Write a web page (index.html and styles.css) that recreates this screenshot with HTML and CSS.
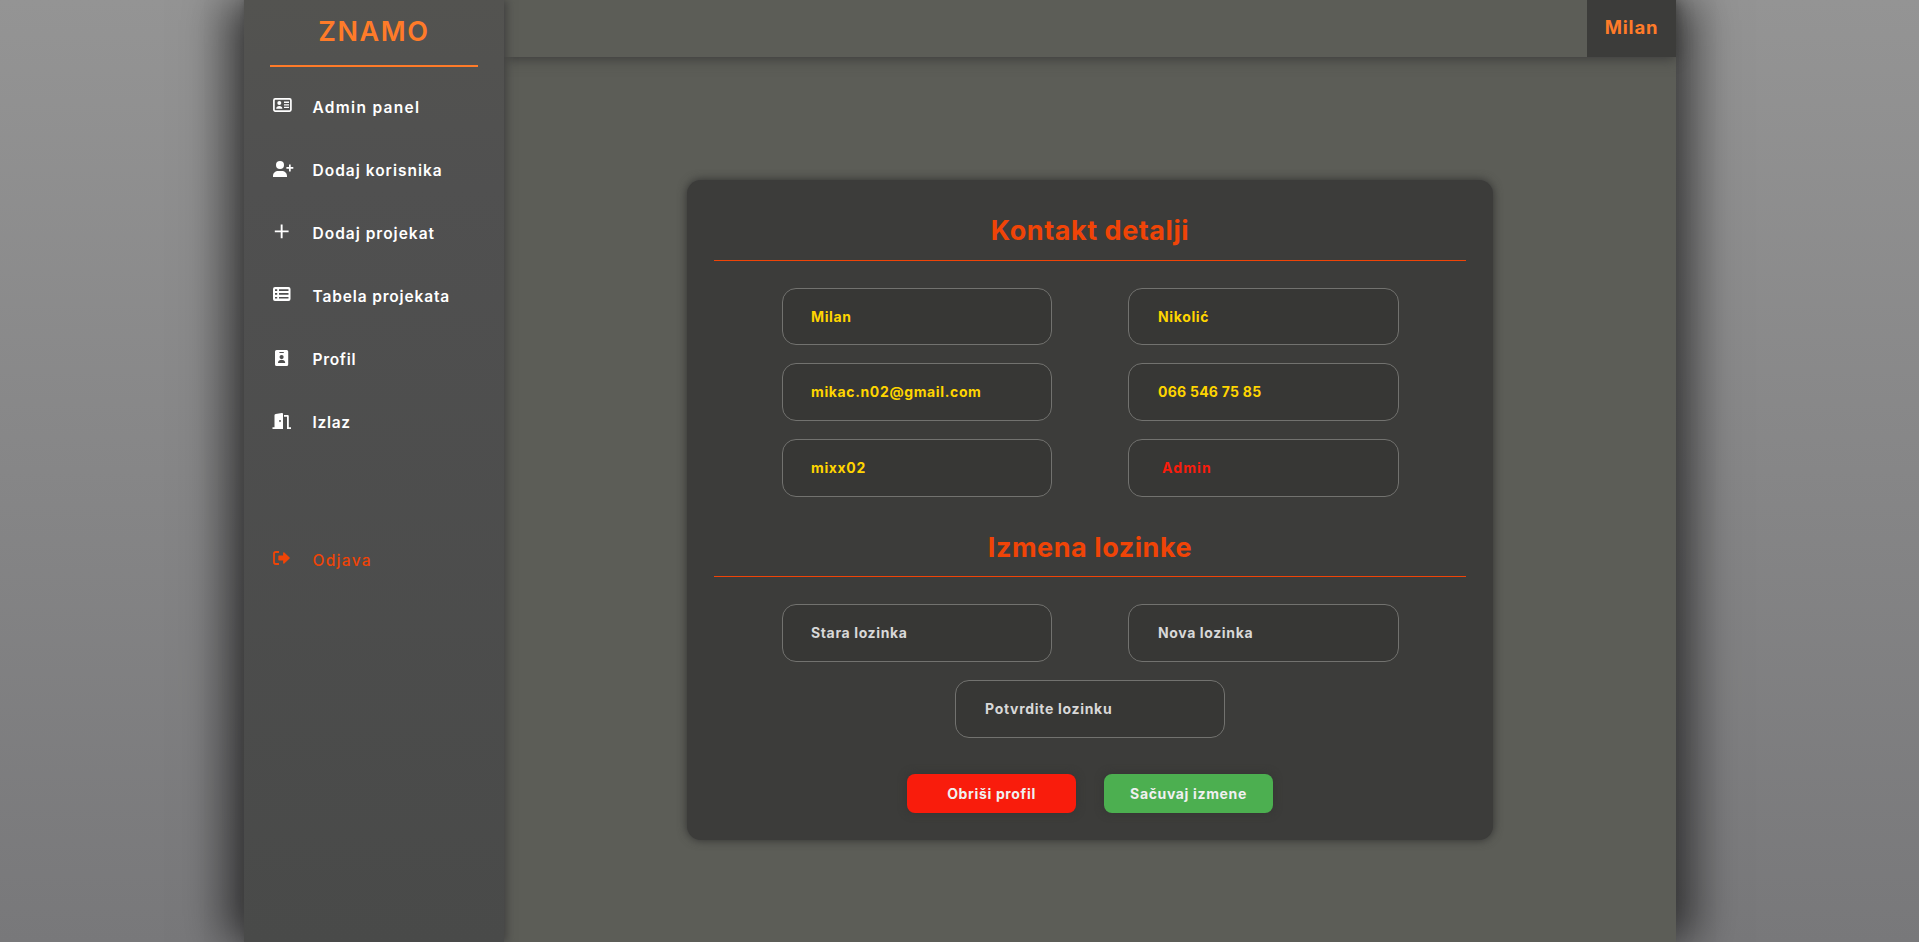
FILE: index.html
```html
<!DOCTYPE html>
<html lang="sr">
<head>
<meta charset="utf-8">
<title>Znamo</title>
<link rel="stylesheet" href="styles.css">
</head>
<body>
<div class="app">
  <aside class="sidebar">
    <div class="brand"><span>ZNAMO</span></div>
    <nav class="nav">
      <a class="item"><svg class="icon" width="20" height="16" viewBox="0 0 20 16"><rect x="1.9" y=".9" width="17" height="12.2" rx="1.3" fill="none" stroke="currentColor" stroke-width="1.7"/><circle cx="7.3" cy="5" r="2"/><path d="M4.200 10.800c0-2 1.300-2.900 3.100-2.900s3.100.9 3.100 2.900zM12 3.600h5v1.300h-5zM12 6.200h5v1.300h-5zM12 8.800h5v1.300h-5z"/></svg><span class="t1">Admin panel</span></a>
      <a class="item"><svg class="icon" width="22" height="16" viewBox="0 0 22 16"><circle cx="8" cy="4" r="4"/><path d="M1 16v-1c0-3 2.200-5 5.400-5h3.200c3.200 0 5.400 2 5.400 5v1zM17 3.500h1.700v2.600h2.600v1.700h-2.600v2.600H17V7.800h-2.600V6.100H17z"/></svg><span class="t2">Dodaj korisnika</span></a>
      <a class="item"><svg class="icon" width="20" height="16" viewBox="0 0 20 16"><path d="M8.700.5h1.900v5.900h6v1.900h-6v5.900H8.700V8.300H2.800V6.400h5.900z"/></svg><span class="t3">Dodaj projekat</span></a>
      <a class="item"><svg class="icon" width="20" height="16" viewBox="0 0 20 16"><path fill-rule="evenodd" d="M3 0h13.500a2 2 0 0 1 2 2v10a2 2 0 0 1-2 2H3a2 2 0 0 1-2-2V2a2 2 0 0 1 2-2zM3 2.300v1.700h2.200v-1.700zM7 2.300v1.700h9.500v-1.700zM3 6.100v1.700h2.200V6.100zM7 6.100v1.700h9.500V6.100zM3 9.900v1.700h2.200v-1.700zM7 9.900v1.700h9.500v-1.700z"/></svg><span class="t4">Tabela projekata</span></a>
      <a class="item"><svg class="icon" width="20" height="16" viewBox="0 0 20 16"><path fill-rule="evenodd" d="M4.600 0h10a1.600 1.600 0 0 1 1.600 1.600v12.800a1.600 1.600 0 0 1-1.600 1.600h-10A1.600 1.600 0 0 1 3 14.400V1.600A1.600 1.600 0 0 1 4.600 0zM7.400 2v1h4.400V2zM9.600 5a2.100 2.100 0 1 0 0 4.200 2.100 2.100 0 0 0 0-4.200zM6 13h7.200c0-2-1.200-3-2.600-3h-2C7.200 10 6 11 6 13z"/></svg><span class="t5">Profil</span></a>
      <a class="item"><svg class="icon" width="20" height="16" viewBox="0 0 20 16"><path fill-rule="evenodd" d="M.5 14.200h2V2.500c0-.8.400-1.200 1.200-1.400L9.800 0c.7-.1 1.200.3 1.200 1v15H.500zM8 7a.8 1 0 1 0 .01 0zM12 2h3.500c.8 0 1.300.5 1.300 1.300v10.900H19V16h-4V3.800h-3z"/></svg><span class="t6">Izlaz</span></a>
      <a class="item logout"><svg class="icon" width="20" height="16" viewBox="0 0 20 16"><path d="M7 1H3.700C2.500 1 2 1.700 2 2.700v8.600c0 1 .5 1.700 1.700 1.700H7" fill="none" stroke="currentColor" stroke-width="1.800"/><path d="M6.300 5.300c0-.5.300-.8.800-.8h4V2c0-.8.700-1 1.200-.5l5.300 5c.3.300.3.700 0 1l-5.300 5c-.5.500-1.200.3-1.200-.5V9.500h-4c-.5 0-.8-.3-.8-.8z"/></svg><span class="t7">Odjava</span></a>
    </nav>
  </aside>
  <div class="content">
    <header class="topbar"><div class="user">Milan</div></header>
    <main class="main">
      <section class="card">
        <h2 class="title">Kontakt detalji</h2>
        <div class="grid">
          <div class="field">Milan</div><div class="field">Nikolić</div>
          <div class="field">mikac.n02@gmail.com</div><div class="field phone">066 546 75 85</div>
          <div class="field">mixx02</div><div class="field role">Admin</div>
        </div>
        <h2 class="title second">Izmena lozinke</h2>
        <div class="grid pass">
          <div class="field">Stara lozinka</div><div class="field">Nova lozinka</div>
          <div class="field wide">Potvrdite lozinku</div>
        </div>
        <div class="actions"><button class="btn red">Obriši profil</button><button class="btn green">Sačuvaj izmene</button></div>
      </section>
    </main>
  </div>
</div>
</body>
</html>
```
FILE: styles.css
```css
* { box-sizing: border-box; }
body {
  margin: 0;
  height: 942px;
  overflow: hidden;
  display: flex;
  padding-left: 244px;
  background: linear-gradient(#949494, #78787a);
  font-family: Inter, Montserrat, sans-serif;
}
.app {
  display: flex;
  width: 1432px;
  height: 942px;
  background: #5c5d57;
  box-shadow: -20px 0 40px rgba(0, 0, 0, .52), 20px 0 40px rgba(0, 0, 0, .52);
}
.sidebar {
  width: 260px;
  padding: 0 26px;
  background: linear-gradient(#535350, #505050 20%, #494a49);
  box-shadow: 3px 0 8px #424241;
  z-index: 2;
}
.brand {
  height: 67px;
  border-bottom: 2px solid #ff7b29;
  color: #ff7b29;
  font-size: 27px;
  font-weight: 600;
  line-height: 64px;
  text-align: center;
  letter-spacing: 1.6px;
}
.nav { padding-top: 8px; }
.item {
  display: flex;
  align-items: center;
  height: 63px;
  color: #fff;
  font-size: 15.5px;
  font-weight: 600;
  letter-spacing: 1px;
}
.icon { margin: 0 0 1px 1.5px; fill: currentColor; }
.item span { margin: 1px 0 0 21px; }
.item .t1 { letter-spacing: 1.3px; }
.item .t2 { margin-left: 19px; }
.item .t4 { letter-spacing: .85px; }
.item .t5, .item .t6 { letter-spacing: .7px; }
.logout { margin-top: 75px; color: #f04407; font-weight: 500; }
.item .t7 { letter-spacing: 1.3px; }
.content { flex: 1; display: flex; flex-direction: column; }
.topbar {
  display: flex;
  justify-content: flex-end;
  height: 57px;
  background: #5c5d57;
  box-shadow: 0 2px 12px #3c3c3b;
}
.user {
  width: 89px;
  background: #3c3c3a;
  color: #ff7b29;
  font-size: 18.5px;
  font-weight: 700;
  line-height: 55px;
  text-align: center;
  letter-spacing: .8px;
}
.main { padding: 123px 0 0 183px; }
.card {
  width: 806px;
  height: 660px;
  padding: 27px;
  border-radius: 14px;
  background: #3c3c3a;
  box-shadow: 0 0 10px #30302f;
}
.title {
  height: 54px;
  margin: 0;
  border-bottom: 1px solid #f04407;
  color: #f04407;
  font-size: 27px;
  font-weight: 700;
  line-height: 48px;
  text-align: center;
  letter-spacing: .55px;
}
.grid {
  display: grid;
  grid-template-columns: 270px 271px;
  grid-auto-rows: 58px;
  gap: 18px 76px;
  padding: 27px 0 0 68px;
}
.grid:not(.pass) { grid-template-rows: 57px; }
.second { margin-top: 26px; line-height: 49px; }
.field {
  padding-left: 28px;
  border: 1px solid #72726f;
  border-radius: 14px;
  background: #373735;
  color: #ffd500;
  font-size: 14px;
  font-weight: 700;
  line-height: 56px;
  letter-spacing: .63px;
}
.field:nth-child(even) { padding-left: 29px; }
.phone { letter-spacing: .25px; }
.grid .role { padding-left: 33px; color: #f91c0c; letter-spacing: 1.1px; }
.pass .field { color: #d8d8d8; }
.wide { grid-column: 1 / 3; width: 270px; margin-left: 173px; }
.pass .wide { padding-left: 29px; letter-spacing: .7px; }
.actions { display: flex; justify-content: center; gap: 28px; padding-top: 36px; }
.btn {
  width: 169px;
  height: 39px;
  padding: 0;
  border: 0;
  border-radius: 8px;
  color: #f0f0f0;
  font: 700 14px Inter, Montserrat, sans-serif;
  letter-spacing: .65px;
  box-shadow: 0 0 8px #343433;
}
.red { background: #f91c0c; }
.green { background: #4caf50; }
```
